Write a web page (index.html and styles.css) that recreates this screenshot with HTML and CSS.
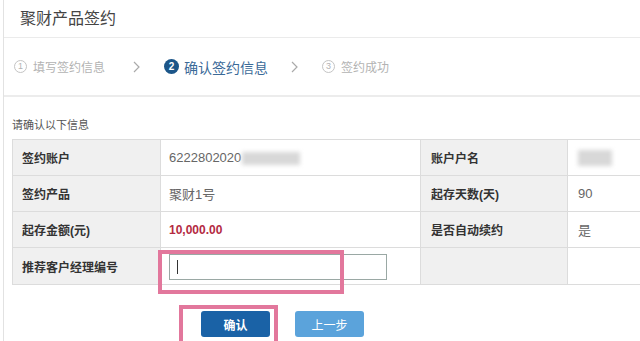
FILE: index.html
```html
<!DOCTYPE html>
<html lang="zh-CN">
<head>
    <meta charset="UTF-8">
    <meta name="viewport" content="width=device-width, initial-scale=1.0">
    <title>聚财产品签约</title>
    <link rel="stylesheet" href="styles.css">
</head>
<body>
    <div class="page">
        <div class="header">聚财产品签约</div>

        <div class="steps">
            <div class="step">
                <span class="num">1</span>填写签约信息
            </div>
            <svg class="arrow" width="7" height="12" viewBox="0 0 7 12"><polyline points="1,1 6,6 1,11" fill="none" stroke="#aaa" stroke-width="1.2"/></svg>
            <div class="step current">
                <span class="num">2</span>确认签约信息
            </div>
            <svg class="arrow" width="7" height="12" viewBox="0 0 7 12"><polyline points="1,1 6,6 1,11" fill="none" stroke="#aaa" stroke-width="1.2"/></svg>
            <div class="step">
                <span class="num">3</span>签约成功
            </div>
        </div>

        <div class="section">
            <div class="section-title">请确认以下信息</div>
            <table class="info">
                <colgroup>
                    <col class="c-label">
                    <col class="c-value">
                    <col class="c-label2">
                    <col>
                </colgroup>
                <tr>
                    <th>签约账户</th>
                    <td>6222802020<span class="masked wide"></span></td>
                    <th>账户户名</th>
                    <td><span class="masked short"></span></td>
                </tr>
                <tr>
                    <th>签约产品</th>
                    <td>聚财1号</td>
                    <th>起存天数(天)</th>
                    <td>90</td>
                </tr>
                <tr>
                    <th>起存金额(元)</th>
                    <td class="amount">10,000.00</td>
                    <th>是否自动续约</th>
                    <td>是</td>
                </tr>
                <tr>
                    <th>推荐客户经理编号</th>
                    <td class="input-cell">
                        <input type="text" class="manager-input">
                        <span class="caret"></span>
                        <span class="mark mark-input"></span>
                    </td>
                    <th></th>
                    <td></td>
                </tr>
            </table>

            <div class="actions">
                <div class="btn-wrap">
                    <button class="btn primary">确认</button>
                    <span class="mark mark-btn"></span>
                </div>
                <button class="btn secondary">上一步</button>
            </div>
        </div>
    </div>
</body>
</html>
```

FILE: styles.css
```css
* {
    margin: 0;
    padding: 0;
    box-sizing: border-box;
}

body {
    font-family: 'Liberation Sans', 'Noto Sans CJK SC', sans-serif;
    background-color: #fff;
    color: #555;
    overflow: hidden;
}

.page {
    margin-left: 3px;
    height: 341px;
    border-left: 1px solid #e2e2e2;
    overflow: hidden;
}

.header {
    height: 38px;
    padding-left: 16px;
    line-height: 37px;
    font-size: 16px;
    color: #444;
    border-bottom: 1px solid #ebebeb;
}

.steps {
    height: 59px;
    display: flex;
    align-items: center;
    padding-left: 10px;
    border-bottom: 2px solid #ececec;
    font-size: 12px;
    color: #b3b3b3;
}

.step {
    display: flex;
    align-items: center;
    gap: 6px;
}

.step .num {
    width: 13px;
    height: 13px;
    border: 1px solid #c4c4c4;
    border-radius: 50%;
    font-size: 9px;
    line-height: 11px;
    text-align: center;
    color: #b3b3b3;
}

.step.current {
    font-size: 14px;
    color: #3b6a98;
    gap: 5px;
}

.step.current .num {
    width: 15px;
    height: 15px;
    border: none;
    background-color: #1c5689;
    color: #fff;
    font-size: 10px;
    font-weight: bold;
    line-height: 15px;
}

.arrow {
    margin: 0 24px 0 28px;
}

.arrow + .step.current + .arrow {
    margin-left: 23px;
}

.section {
    padding: 20px 0 0 8px;
}

.section-title {
    font-size: 11px;
    color: #555;
    line-height: 16px;
    margin-bottom: 6px;
}

.info {
    width: 660px;
    table-layout: fixed;
    border-collapse: collapse;
    font-size: 12px;
}

.c-label {
    width: 148px;
}

.c-value {
    width: 260px;
}

.c-label2 {
    width: 147px;
}

.info th,
.info td {
    height: 36px;
    border: 1px solid #dcdcdc;
    text-align: left;
    vertical-align: middle;
}

.info th {
    background-color: #f0f0f0;
    color: #333;
    font-weight: bold;
    padding-left: 9px;
}

.info td {
    padding-left: 8px;
    color: #666;
    font-size: 13px;
}

.info td:last-child {
    padding-left: 10px;
}

.info th:nth-child(3) {
    padding-left: 10px;
}

.info tr:last-child th,
.info tr:last-child td {
    height: 37px;
}

.info td.amount {
    color: #b42a42;
    font-weight: bold;
    font-size: 12px;
}

.masked {
    display: inline-block;
    height: 13px;
    vertical-align: middle;
    background-color: #d8d8d8;
    filter: blur(2px);
}

.masked.wide {
    width: 58px;
    margin-left: 1px;
}

.masked.short {
    width: 34px;
    height: 16px;
}

.input-cell {
    position: relative;
}

.manager-input {
    width: 218px;
    height: 26px;
    margin-top: 2px;
    border: 1px solid #9aa8a4;
    outline: none;
    display: block;
}

.caret {
    position: absolute;
    left: 16px;
    top: 12px;
    width: 1px;
    height: 14px;
    background-color: #333;
}

.mark {
    position: absolute;
    border: 4px solid #e2779c;
    pointer-events: none;
}

.mark-input {
    left: -3px;
    top: 2px;
    width: 186px;
    height: 44px;
}

.actions {
    display: flex;
    gap: 25px;
    margin-top: 26px;
    padding-left: 189px;
}

.btn-wrap {
    position: relative;
}

.mark-btn {
    left: -22px;
    top: -6px;
    width: 99px;
    height: 46px;
}

.btn {
    width: 69px;
    height: 26px;
    border: none;
    border-radius: 3px;
    color: #fff;
    font-size: 12px;
    font-family: 'Noto Sans CJK SC', sans-serif;
}

.btn.primary {
    background-color: #1a62a6;
    font-weight: bold;
}

.btn.secondary {
    background-color: #5ba3db;
}
```
